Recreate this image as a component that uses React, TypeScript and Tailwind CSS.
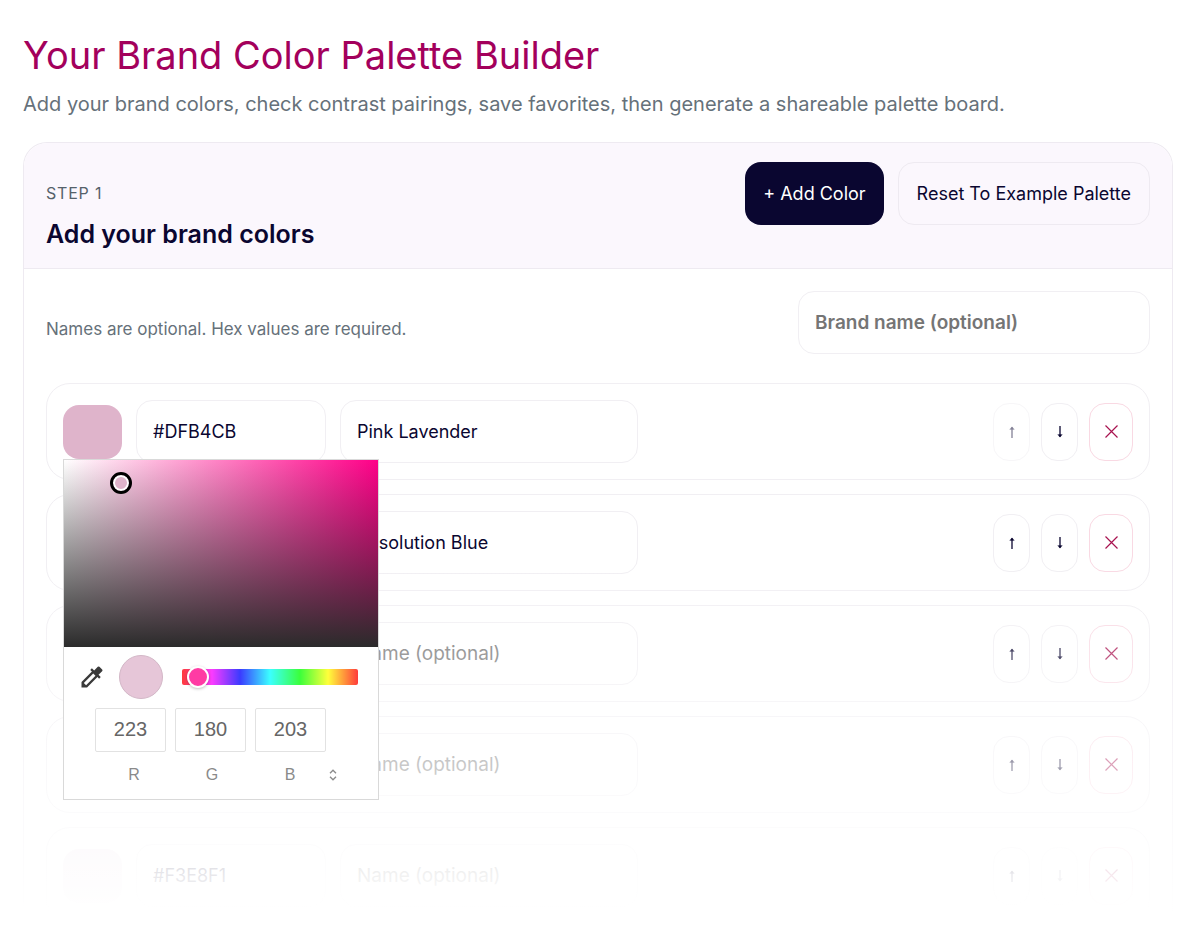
import { useState } from 'react';

interface BrandColor {
  hex: string;
  name: string;
}

const initialColors: BrandColor[] = [
  { hex: '#DFB4CB', name: 'Pink Lavender' },
  { hex: '#0A2A83', name: 'Resolution Blue' },
  { hex: '#A3005C', name: '' },
  { hex: '#0A0630', name: '' },
  { hex: '#F3E8F1', name: '' },
];

const fieldClass =
  'block h-[63px] w-full min-w-0 rounded-2xl border border-[#f1eff3] bg-white px-4 text-[#0a0630] placeholder:text-[19px] placeholder:text-[#757575] outline-none';

const moveClass =
  'flex h-[58px] w-[37px] items-center justify-center rounded-2xl border border-[#f1eff3] bg-white text-[#0a0630] disabled:opacity-50';

function ArrowIcon({ down = false }: { down?: boolean }) {
  return (
    <svg className={down ? 'h-3 w-2 rotate-180' : 'h-3 w-2'} viewBox="0 0 8 12" fill="none" stroke="currentColor" aria-hidden="true">
      <path d="M4 12V1.2" strokeWidth="1.3" />
      <path d="M1.6 3.4 4 0.8l2.4 2.6z" fill="currentColor" strokeWidth="0.2" />
    </svg>
  );
}

function CrossIcon() {
  return (
    <svg className="h-[13px] w-[13px]" viewBox="0 0 13 13" fill="none" stroke="currentColor" strokeWidth="1.2" aria-hidden="true">
      <path d="M0.5 0.5l12 12M12.5 0.5l-12 12" />
    </svg>
  );
}

function EyedropperIcon() {
  return (
    <svg className="h-7 w-7" viewBox="0 0 24 24" fill="currentColor" aria-hidden="true">
      <path d="M20.71 5.63l-2.34-2.34a1 1 0 0 0-1.41 0l-3.12 3.12-1.93-1.91-1.41 1.41 1.42 1.42L3 16.25V21h4.75l8.92-8.92 1.42 1.42 1.41-1.41-1.92-1.92 3.12-3.12a1 1 0 0 0 .01-1.42zM6.92 19L5 17.08l8.06-8.06 1.92 1.92L6.92 19z" />
    </svg>
  );
}

function ColorPicker() {
  const channels = [
    { label: 'R', value: '223' },
    { label: 'G', value: '180' },
    { label: 'B', value: '203' },
  ];

  return (
    <div className="absolute top-full left-0 z-20 w-[316px] border border-[#d9d9d9] bg-white pb-3 font-['Liberation_Sans',Arial,sans-serif]">
      {/* Saturation / brightness area */}
      <div className="relative h-[187px] bg-[linear-gradient(to_top,#2b2b2b,transparent),linear-gradient(to_right,#ffffff,#ff0088)]">
        <span className="absolute top-3 left-[46px] h-[22px] w-[22px] rounded-full border-3 border-black bg-[#dfb4cb] shadow-[inset_0_0_0_2px_#ffffff]" />
      </div>

      <div className="flex items-center pt-2 pr-5 pl-[14px]">
        <button type="button" aria-label="Pick from screen" className="text-[#3a3a3a]">
          <EyedropperIcon />
        </button>
        <span className="ml-[13px] h-11 w-11 shrink-0 rounded-full border border-[#d3b7c7] bg-[#e6c6d8]" />
        <input
          type="range"
          aria-label="Hue"
          min="0"
          max="100"
          defaultValue="3"
          className="ml-[19px] h-4 w-full min-w-0 appearance-none rounded-xs bg-[linear-gradient(to_right,#ff3b3b,#fb3bff_17%,#3b3bff_33%,#3bffff_50%,#3bff3b_67%,#ffff3b_83%,#ff3b3b)] [&::-webkit-slider-thumb]:h-[22px] [&::-webkit-slider-thumb]:w-[22px] [&::-webkit-slider-thumb]:appearance-none [&::-webkit-slider-thumb]:rounded-full [&::-webkit-slider-thumb]:border-2 [&::-webkit-slider-thumb]:border-white [&::-webkit-slider-thumb]:bg-[#ff3ba4] [&::-webkit-slider-thumb]:shadow-[0_1px_3px_rgba(0,0,0,0.25)]"
        />
      </div>

      <div className="flex gap-[9px] pt-[9px] pl-[31px]">
        {channels.map((channel) => (
          <input
            key={channel.label}
            id={`channel-${channel.label}`}
            defaultValue={channel.value}
            className="h-11 w-[71px] rounded-xs border border-[#e2e2e2] text-center text-xl text-[#666666] outline-none"
          />
        ))}
      </div>

      <div className="flex items-center pt-[11px] pl-[31px] text-base text-[#8a8a8a]">
        {channels.map((channel) => (
          <label key={channel.label} htmlFor={`channel-${channel.label}`} className="w-[78px] text-center">
            {channel.label}
          </label>
        ))}
        <button type="button" aria-label="Change color format">
          <svg className="h-3 w-2" viewBox="0 0 8 12" fill="none" stroke="currentColor" strokeWidth="1.3" aria-hidden="true">
            <path d="M1 4.2 4 1.2l3 3M1 7.8l3 3 3-3" />
          </svg>
        </button>
      </div>
    </div>
  );
}

export default function App() {
  const [colors, setColors] = useState<BrandColor[]>(initialColors);
  const [openPicker, setOpenPicker] = useState<number | null>(0);

  const updateColor = (index: number, patch: Partial<BrandColor>) => {
    setColors(colors.map((color, i) => (i === index ? { ...color, ...patch } : color)));
  };

  const moveColor = (from: number, to: number) => {
    if (to < 0 || to >= colors.length) return;
    const next = [...colors];
    const [moved] = next.splice(from, 1);
    next.splice(to, 0, moved);
    setColors(next);
  };

  return (
    <main className="bg-white pt-7 pr-[27px] pb-3 pl-[23px] font-['Inter',sans-serif] text-lg text-[#0a0630]">
      <h1 className="text-[38px] leading-[54px] font-normal text-[#a3005c]">Your Brand Color Palette Builder</h1>
      <p className="pt-2 text-xl leading-7 font-normal text-[#66717a]">
        Add your brand colors, check contrast pairings, save favorites, then generate a shareable palette board.
      </p>

      <section className="relative mt-6 rounded-t-3xl border border-b-0 border-[#eeeaf1]">
        <header className="flex flex-wrap items-start justify-between gap-4 rounded-t-3xl border-b border-[#eeeaf1] bg-[#fbf7fd] px-[22px] pt-[19px] pb-[17px]">
          <div className="pt-[19px]">
            <p className="text-base leading-6 tracking-wider text-[#55616a]">STEP 1</p>
            <h2 className="pt-3 text-[25px] leading-[34px] font-semibold">Add your brand colors</h2>
          </div>
          <div className="flex gap-[14px]">
            <button
              type="button"
              onClick={() => setColors([...colors, { hex: '#FFFFFF', name: '' }])}
              className="h-[63px] rounded-2xl bg-[#0a0630] px-[18px] text-white"
            >
              + Add Color
            </button>
            <button
              type="button"
              onClick={() => setColors(initialColors)}
              className="h-[63px] rounded-2xl border border-[#eeeaf1] px-[18px]"
            >
              Reset To Example Palette
            </button>
          </div>
        </header>

        <div className="px-[22px] pt-[22px]">
          <div className="flex items-center justify-between gap-4">
            <p className="pt-3 text-[17px] leading-6 text-[#66717a]">Names are optional. Hex values are required.</p>
            <div className="w-[352px]">
              <input aria-label="Brand name" placeholder="Brand name (optional)" className={`${fieldClass} font-semibold`} />
            </div>
          </div>

          <ul className="flex flex-col gap-[14px] pt-[29px]">
            {colors.map((color, index) => (
              <li
                key={index}
                className="flex items-center justify-between gap-4 rounded-3xl border border-[#f1eff3] p-4"
              >
                <div className="grid grow grid-cols-[59px_190px_minmax(0,298px)] items-center gap-[14px]">
                  <div className="relative">
                    <button
                      type="button"
                      aria-label={`Edit ${color.hex}`}
                      onClick={() => setOpenPicker(openPicker === index ? null : index)}
                      className="block h-[54px] w-[59px] rounded-2xl"
                      style={{ backgroundColor: color.hex }}
                    />
                    {openPicker === index && <ColorPicker />}
                  </div>
                  <input
                    aria-label="Hex value"
                    value={color.hex}
                    onChange={(e) => updateColor(index, { hex: e.target.value })}
                    className={fieldClass}
                  />
                  <input
                    aria-label="Color name"
                    placeholder="Name (optional)"
                    value={color.name}
                    onChange={(e) => updateColor(index, { name: e.target.value })}
                    className={fieldClass}
                  />
                </div>
                <div className="flex gap-[11px]">
                  <button type="button" aria-label="Move up" disabled={index === 0} onClick={() => moveColor(index, index - 1)} className={moveClass}>
                    <ArrowIcon />
                  </button>
                  <button type="button" aria-label="Move down" disabled={index === colors.length - 1} onClick={() => moveColor(index, index + 1)} className={moveClass}>
                    <ArrowIcon down />
                  </button>
                  <button
                    type="button"
                    aria-label="Remove color"
                    onClick={() => setColors(colors.filter((_, i) => i !== index))}
                    className="flex h-[58px] w-11 items-center justify-center rounded-2xl border border-[#f9d9e3] bg-white text-[#a8124f]"
                  >
                    <CrossIcon />
                  </button>
                </div>
              </li>
            ))}
          </ul>
        </div>

        {/* Fade out the end of the list */}
        <div className="pointer-events-none absolute -inset-x-px bottom-0 z-10 h-[365px] bg-linear-to-b from-white/0 via-white/75 via-70% to-white to-97%" />
      </section>
    </main>
  );
}
